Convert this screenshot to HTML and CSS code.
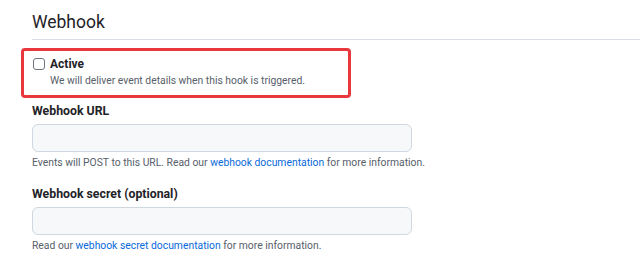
FILE: index.html
```html
<!DOCTYPE html>
<html lang="en">
<head>
<meta charset="utf-8">
<title>Webhook</title>
<link rel="stylesheet" href="styles.css">
</head>
<body>
<div class="page">
  <div class="subhead">
    <h2 class="subhead-title">Webhook</h2>
  </div>
  <div class="content">
    <div class="highlight">
      <div class="check-row">
        <input type="checkbox" class="checkbox" id="active">
        <div class="check-text">
          <label class="check-label" for="active">Active</label>
          <p class="note note-check">We will deliver event details when this hook is triggered.</p>
        </div>
      </div>
    </div>
    <div class="field field-first">
      <label class="field-label" for="url">Webhook URL</label>
      <input class="input" id="url" type="text">
      <p class="note note-help">Events will POST to this URL. Read our <a href="#">webhook documentation</a> for more information.</p>
    </div>
    <div class="field">
      <label class="field-label" for="secret">Webhook secret (optional)</label>
      <input class="input" id="secret" type="text">
      <p class="note note-help">Read our <a href="#">webhook secret documentation</a> for more information.</p>
    </div>
  </div>
</div>
</body>
</html>
```
FILE: styles.css
```css
* { box-sizing: border-box; }
html, body { margin: 0; padding: 0; background: #ffffff; }
body {
  font-family: Roboto, "Liberation Sans", sans-serif;
  color: #1f2328;
  width: 640px;
  height: 260px;
  overflow: hidden;
}
.page { padding-left: 32px; }
.subhead {
  padding-top: 10px;
  padding-bottom: 5px;
  border-bottom: 1px solid #d8dee4;
}
.subhead-title {
  margin: 0;
  font-size: 17.5px;
  line-height: 24px;
  font-weight: 400;
  color: #1f2328;
}
.content { width: 380px; }
.highlight {
  margin-top: 8px;
  margin-left: -11px;
  width: 330px;
  border: 3px solid #e8383d;
  border-radius: 4px;
  padding: 5px 8px 7px 8px;
}
.check-row { display: flex; align-items: flex-start; }
.checkbox {
  appearance: none;
  -webkit-appearance: none;
  width: 12px;
  height: 12px;
  margin: 2px 5px 0 1px;
  border: 1px solid #6e7781;
  border-radius: 3px;
  background: #fff;
  flex: none;
}
.check-text { display: flex; flex-direction: column; }
.check-label {
  font-size: 12px;
  line-height: 16px;
  font-weight: 700;
  color: #1f2328;
}
.note {
  margin: 0;
  font-size: 10.35px;
  line-height: 14px;
  color: #57606a;
  white-space: nowrap;
}
.note-check { margin-top: 2px; }
.note-help { margin-top: 4px; }
.note a { color: #0969da; text-decoration: none; }
.field { display: flex; flex-direction: column; margin-top: 16px; }
.field-first { margin-top: 5px; }
.field-label {
  font-size: 12.3px;
  line-height: 16px;
  font-weight: 700;
  color: #1f2328;
}
.input {
  margin-top: 5px;
  width: 380px;
  height: 28px;
  border: 1px solid #d0d7de;
  border-radius: 6px;
  background: #f6f8fa;
  padding: 0 8px;
  font: inherit;
}
```
